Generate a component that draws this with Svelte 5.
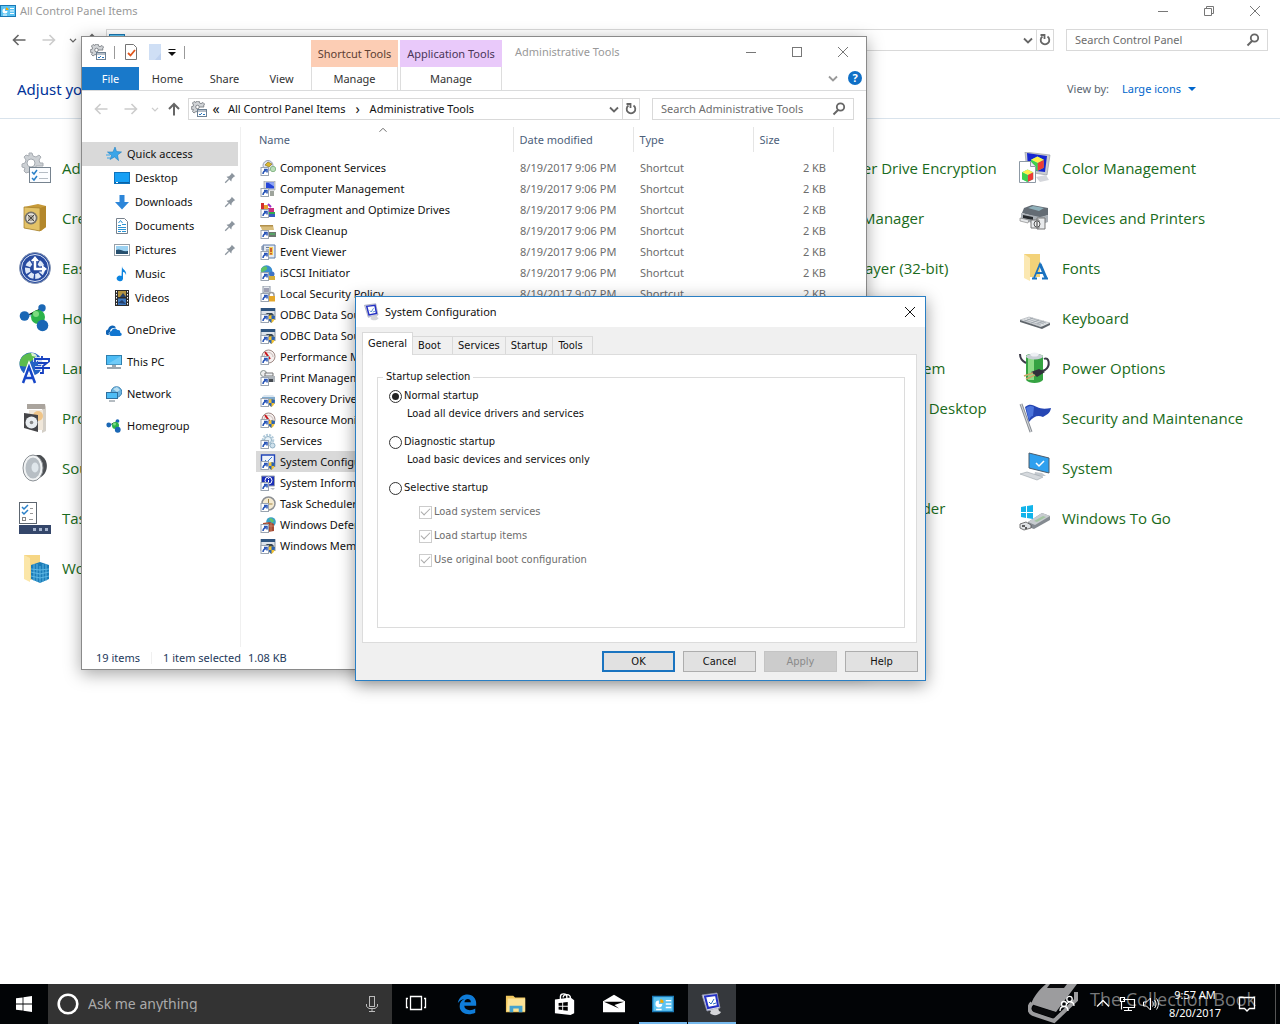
<script>
  let startup = $state('normal');
  let activeTab = $state('General');
  let viewBy = $state('Large icons');

  // small parts that several icons share
  const arrow = `<rect x="1" y="7.500" width="7.500" height="8" fill="#fff" stroke="#9aa4b0"/><path d="M3 14c0-2 1-3 3-3.500M4 9.500h3v3" fill="none" stroke="#2a56b8" stroke-width="1.500"/>`;
  const shield = `<path d="M8 9l3.500-1L15 9c0 3-1 5.500-3.500 7C9 14.500 8 12 8 9z" fill="#f2c230"/><path d="M11.500 8L15 9l-.3 3h-3.200zM8.300 12h3.200v4C9.500 14.700 8.700 13.500 8.300 12z" fill="#2a62b5"/>`;
  const gauge = `<circle cx="8.500" cy="7.500" r="6.500" fill="#f5efee" stroke="#a08c88"/><path d="M4 8a4.500 4.500 0 0 1 9 0" fill="none" stroke="#c9bdb9"/><path d="M5 3l5 7" stroke="#c8171e" stroke-width="2"/>`;
  const appWindow = `<rect x="1" y="1.500" width="14" height="11" fill="#dde3ea" stroke="#8593a3"/><path d="M1 1h14v3H1z" fill="#2f5580"/><path d="M4 8l3-2h5l2 2-2 3H6z" fill="#384858"/>`;
  const printer = `<path d="M5 3h8v3H5z" fill="#eef1f4" stroke="#777"/><path d="M2 6h13v6H2z" fill="#aeb4ba"/><path d="M4 9h9v3H4z" fill="#454b52"/>`;
  const cubes = `<path d="M0 3l4-2 4 2v5L4 10 0 8z" fill="#26d9c5"/><path d="M4 5l4-2v5l-4 2z" fill="#ef3b35"/><path d="M0 3l4-2 4 2-4 2z" fill="#fff04a"/><path d="M0 3l4 2v5L0 8z" fill="#3fd24a"/>`;

  const icons = {
    controlPanel: [16, `<rect x=".5" y="2.500" width="15" height="11" fill="#5cc3f2" stroke="#1b78b4"/><path d="M5 5.500A2.500 2.500 0 1 0 7.500 8H5z" fill="#fff"/><path d="M6 4.500A2.500 2.500 0 0 1 8.500 7H6z" fill="#f5a800"/><path d="M10 5.500h4M10 8h4M10 10.500h4M3 12h4" stroke="#fff"/>`],
    tools: [16, `<path d="M6 0h2l.5 2 1.500.6L12 1.500 13.500 3l-1 2 .5 1H7v5l-2-.5L3 12 1.500 10.500l1-2L0 8V6l2-.5.5-1.500-1-2L3 .5l2 1z" fill="#d0d3d6" stroke="#85898e"/><circle cx="6.500" cy="6" r="1.800" fill="#fff" stroke="#85898e"/><rect x="6.500" y="8.500" width="9" height="7" fill="#fff" stroke="#6c7f92"/><path d="M7 10h8" stroke="#6c7f92"/><path d="M8 13l1 1 2-2M12 13.500h2" fill="none" stroke="#2878c0"/>`],
    check: [16, `<path d="M2.500.5h8l3 3v12h-11z" fill="#fff" stroke="#747474"/><path d="M5 9l2.500 2.500L12 6" fill="none" stroke="#e0561c" stroke-width="1.800"/>`],
    blank: [16, `<path d="M2 0h12v16H2z" fill="#cfdff5"/><path d="M14 9v7H8z" fill="#bfd2ef"/>`],
    customize: [12, `<path d="M2.500 3.500h7" stroke="#111"/><path d="M2 6h8l-4 4z" fill="#111"/>`],
    back: [16, `<path d="M14.500 8H2.500M7.500 3L2.500 8l5 5" fill="none" stroke="currentColor" stroke-width="1.600"/>`],
    forward: [16, `<path d="M1.500 8h12M8.500 3l5 5-5 5" fill="none" stroke="currentColor" stroke-width="1.600"/>`],
    up: [16, `<path d="M8 14.500V3M3 8l5-5 5 5" fill="none" stroke="currentColor" stroke-width="2"/>`],
    chevron: [16, `<path d="M4 6.500l4 4 4-4" fill="none" stroke="currentColor" stroke-width="1.800"/>`],
    sort: [16, `<path d="M4 10l4-4 4 4" fill="none" stroke="#555"/>`],
    refresh: [14, `<path d="M9.500 3.500A4.300 4.300 0 1 1 4.500 3.500" fill="none" stroke="#666" stroke-width="1.800"/><path d="M2.500 2h4v4" fill="none" stroke="#666" stroke-width="1.800"/>`],
    search: [16, `<circle cx="9.500" cy="6" r="3.700" fill="none" stroke="#666" stroke-width="1.800"/><path d="M7 9l-4.500 4.500" stroke="#666" stroke-width="2"/>`],
    minimize: [16, `<path d="M3 8.500h10" stroke="currentColor"/>`],
    maximize: [16, `<rect x="3.500" y="3.500" width="9" height="9" fill="none" stroke="currentColor"/>`],
    restore: [16, `<path d="M3.500 5.500h7v7h-7zM5.500 5.500v-2h7v7h-2" fill="none" stroke="currentColor"/>`],
    close: [16, `<path d="M3 3l10 10M13 3L3 13" stroke="currentColor"/>`],
    pin: [16, `<path d="M10 2l4 4-1.500.5L10 9l-.5 3L4 6.500 7 6l2.500-2.500z" fill="#8c959e"/><path d="M6.500 9.500L2.500 13.500" stroke="#8c959e" stroke-width="1.500"/>`],

    star: [16, `<path d="M9 1l1.500 4.500 5 .5-4 3 1 5.500L8.500 11 4 13.500l1.500-4-4-3.500H7z" fill="#3ba5e8" stroke="#1c7fc4" stroke-width=".6"/><path d="M0 9h4M1 12h3" stroke="#3ba5e8"/>`],
    desktop: [16, `<rect x=".5" y="2.500" width="15" height="11" fill="#17a0f5" stroke="#0d73bd"/><path d="M1 12.500h14" stroke="#0b62a5"/><path d="M2 12.500h2" stroke="#fff"/>`],
    downloads: [16, `<path d="M5.500 1h5v7h4.500L8 15.500 1 8h4.500z" fill="#2d86d9"/>`],
    documents: [16, `<path d="M2.500.5h8l3 3v12h-11z" fill="#fff" stroke="#77818c"/><path d="M4.500 5l2-2.500L8.500 5M4 7.500h3M8 6.500h4M4 9.500h8M4 11.500h8M4 13.500h3M8 13.500h4" fill="none" stroke="#2b93d3"/>`],
    pictures: [16, `<rect x=".5" y="2.500" width="15" height="11" fill="#fff" stroke="#97a0a8"/><path d="M2 4h12v8H2z" fill="#9cd2f2"/><path d="M2 8c4-2 6 2 12 1v3H2z" fill="#264f6d"/>`],
    music: [16, `<path d="M8 0c0 4 5 4 4 9-.5-2-1.500-3-3-3v7a3.200 2.800 0 1 1-1.500-3z" fill="#0c84e0"/>`],
    videos: [16, `<path d="M1 0h14v16H1z" fill="#2b2b2b"/><path d="M4 1h8v6H4z" fill="#b39340"/><path d="M4 8.500h8V15H4z" fill="#3d78c0"/><path d="M6 7l3-4 3 4M4 13l4-3 4 4" fill="#24406b"/><path d="M2.500 1v15M13.500 1v15" stroke="#fff" stroke-dasharray="1.500 1.500"/>`],
    onedrive: [16, `<path d="M1 13a3 3 0 0 1 1-5.500C3 3 8 2 10 5.500L8 6c-3 0-4 2-4 4-1.500.5-1.500 2-1 3z" fill="#0f63b5"/><path d="M6 14a2.500 2.500 0 0 1-.5-5C6 6 10 5.500 11.500 8c2.500-.5 3 1.500 2.500 2.500 2.500.5 2 3.500 0 3.500z" fill="#1176d0"/>`],
    pc: [16, `<rect x=".5" y="1.500" width="15" height="9" fill="#4dbcf5" stroke="#2e7fae"/><path d="M1 10.500L15 2v8.500z" fill="#8bd6fa" opacity=".6"/><path d="M6 12h4M1 14h14" stroke="#7d8a95" stroke-width="1.300"/>`],
    network: [16, `<circle cx="10.500" cy="6" r="5.300" fill="#6cb4e0" stroke="#3e84b5"/><path d="M7 3l4-2 3 3-3 2z" fill="#b9dff2"/><rect x=".5" y="6.500" width="11" height="6" fill="#4dbcf5" stroke="#2e6f9e"/><path d="M3 15h6" stroke="#6d7a85"/>`],
    homegroup: [32, `<path d="M6 14l13-1 5-8M19 14l4 10" stroke="#8fc6e8" stroke-width="2"/><circle cx="5.500" cy="14" r="4.800" fill="#1a67b5"/><circle cx="23" cy="6" r="3.700" fill="#1a67b5"/><circle cx="19" cy="15" r="7" fill="#2bb34a"/><circle cx="23.500" cy="23.500" r="5.800" fill="#1a67b5"/><circle cx="17" cy="12" r="3" fill="#7cdb7f"/>`],

    component: [16, `<circle cx="8" cy="5.500" r="5" fill="#dfe3ee" stroke="#98a2b8"/><path d="M5 5l3-3 4 2-3 3z" fill="#d9b62c" stroke="#7e6a1c" stroke-width=".6"/><circle cx="13" cy="9" r="2.700" fill="#b9deb9" stroke="#8bb98b"/>${arrow}`],
    computer: [16, `<path d="M4 0h11v9H4z" fill="#d4d7dc" stroke="#8b9097" stroke-width=".6"/><path d="M6 1.500h8v6H6z" fill="#2445d8"/><path d="M8 1.500h6v4z" fill="#8ea6f5"/><path d="M10 10h4v5h-4z" fill="#9ea49c"/>${arrow}`],
    defrag: [16, `<path d="M1 1h3v6H1z" fill="#d22f2f"/><path d="M4 3h4v4H4z" fill="#e8a030"/><path d="M8 2l3 3" stroke="#9b2fc6" stroke-width="2"/><path d="M8 6h6v4H8z" fill="#cc2f80"/><path d="M9 10h6v2H9z" fill="#32a850"/><path d="M9 12h6v3H9z" fill="#365ec0"/>${arrow}`],
    cleanup: [16, `<path d="M0 2h13l1 5H2z" fill="#d8bd7c"/><path d="M0 2h13v1.500H0z" fill="#b2904c"/><path d="M8 9h8v5H8z" fill="#6d7770"/><path d="M10 11h5" stroke="#46d060"/>${arrow}`],
    event: [16, `<path d="M3 1h12v13H3z" fill="#e4e9f1" stroke="#5d7aa8"/><path d="M1 3h3M1 5h3M6 3.500h3M6 6h3" stroke="#697d99"/><path d="M9 3h4v8H9z" fill="#f3cf55"/><path d="M11 4v4M11 9v1.500" stroke="#bf3a20" stroke-width="1.500"/>${arrow}`],
    iscsi: [16, `<circle cx="6.500" cy="6" r="5.800" fill="#3b8ed0"/><path d="M3 2c3-2 5 0 4 2S3 6 2 8c-2-3-1-5 1-6z" fill="#5fc266"/><circle cx="12" cy="9" r="2.500" fill="#3f72c4"/><path d="M9 11h6v4H9z" fill="#d5ae3a"/>${arrow}`],
    policy: [16, `<path d="M3 0h7v7H3z" fill="#e8ecf0" stroke="#8d98a5"/><path d="M4 3h5M4 5h5" stroke="#557"/><path d="M9 10.500V9a2.500 2.500 0 0 1 5 0v1.500" fill="none" stroke="#9a9a9a" stroke-width="1.500"/><path d="M8.500 10H15v5.500H8.500z" fill="#e4a72b"/>${arrow}`],
    odbc: [16, `${appWindow}${shield}${arrow}`],
    memory: [16, `${appWindow}${shield}${arrow}`],
    performance: [16, `${gauge}${arrow}`],
    resource: [16, `${gauge}${shield}${arrow}`],
    print: [16, `<circle cx="3.500" cy="3.500" r="3" fill="#eee" stroke="#85908f"/>${printer}${arrow}`],
    recovery: [16, `<path d="M2 6l2-2h9l2 2z" fill="#dbe6ef"/><path d="M2 6h13v7H2z" fill="#7fa9cc"/>${shield}${arrow}`],
    services: [16, `<circle cx="8" cy="7" r="5" fill="none" stroke="#b4ccdb" stroke-width="2.500" stroke-dasharray="2 1"/><circle cx="8" cy="7" r="3.500" fill="#e8f2f8" stroke="#8fb0c4"/><circle cx="12.500" cy="12.500" r="2.500" fill="#cfe1ec" stroke="#8fb0c4"/>${arrow}`],
    sysconfig: [16, `<path d="M1.500 1h13v11h-13z" fill="#eef3fb" stroke="#2346b8" stroke-width="1.400"/><path d="M5 6l2 2 5-5" fill="none" stroke="#3a76d2"/>${shield}${arrow}`],
    sysinfo: [16, `<path d="M1.500 1h13v10h-13z" fill="#1b2fb8" stroke="#9ca3ad"/><circle cx="8.500" cy="5.500" r="3.500" fill="none" stroke="#fff"/><path d="M8.500 3v1M8.500 5v3" stroke="#fff"/><path d="M10 13h5l-2 2z" fill="#b7bcc2"/>${arrow}`],
    scheduler: [16, `<circle cx="8.500" cy="7.500" r="6.500" fill="#f4ead0" stroke="#8d9094" stroke-width="1.500"/><path d="M8.500 3v5h4" fill="none" stroke="#a28747"/>${arrow}`],
    firewall: [16, `<circle cx="11" cy="5" r="4.800" fill="#3aa0c8"/><path d="M9 2c2-2 4 0 5 2l-2 2z" fill="#65c46a"/><path d="M3 6l7-1 4 2v7l-6 1-5-2z" fill="#a44a32"/><path d="M3 9h11M7 5v10M11 6v8" stroke="#d79275" stroke-width=".7"/>${arrow}`],

    admin: [32, `<path d="M10 1h3l1 3 3 1 3-2 2 2-2 3 1 3h3v3h-7v9h-6l-1-3-3 1-2-2 1-3-3-1v-3l3-1 1-3-2-3 2-2 3 1z" fill="#ccd0d4" stroke="#a8adb3"/><circle cx="12" cy="11" r="4" fill="#fff" stroke="#a5abb1"/><rect x="10.500" y="15.500" width="21" height="15" fill="#fcfdff" stroke="#76838f"/><path d="M13 20l2 2 3-4M13 26l2 2 3-4" fill="none" stroke="#2a80c8" stroke-width="1.500"/><path d="M20 20.500h9M20 26.500h9" stroke="#b5bcc4"/>`],
    credential: [32, `<path d="M5 5l14-3 8 2v21l-5 4-17-3z" fill="#c79a38"/><path d="M5 5l16 1v23L5 26z" fill="#e3c267" stroke="#a17a27" stroke-width=".7"/><path d="M21 6l6-2v21l-6 4z" fill="#b3872b"/><circle cx="12" cy="16" r="6.500" fill="#77736a"/><circle cx="12" cy="16" r="4" fill="#aaa69c" stroke="#ece9e2" stroke-width="1.500"/><path d="M9 13l6 6M15 13l-6 6" stroke="#4c4943"/>`],
    ease: [32, `<circle cx="16" cy="16" r="15.500" fill="#274a9f" stroke="#8b9ab5"/><circle cx="16" cy="16" r="13.500" fill="none" stroke="#dbe5f5"/><circle cx="16" cy="17" r="7.500" fill="none" stroke="#dfe9f8" stroke-width="5" stroke-dasharray="5 1.500"/><path d="M16 8v9h8" fill="none" stroke="#274a9f" stroke-width="5"/><path d="M16 8v9h8" fill="none" stroke="#fff" stroke-width="2.500"/><path d="M12 9l4-5 4 5zM23 13l5 4-5 4z" fill="#fff"/>`],
    language: [32, `<circle cx="12" cy="12" r="11.500" fill="#2362c4"/><path d="M4 4c5-4 11-4 12 0s-5 4-6 8-6 2-9 2c-1-4 0-7 3-10z" fill="#5cbc4d"/><path d="M12 1c4 0 6 2 6 4l-5-1z" fill="#d9f0d0"/><path d="M16 7h15M16 6v4M30 6v4M23 4v3M19 11h9l-4 3v7h-3M16 16h15" fill="none" stroke="#fff" stroke-width="3.500"/><path d="M16 7h15M16 6v4M30 6v4M23 4v3M19 11h9l-4 3v7h-3M16 16h15" fill="none" stroke="#1640c0" stroke-width="1.800"/><path d="M4 31L10 15l6 16M6 26h8" fill="none" stroke="#fff" stroke-width="5"/><path d="M4 31L10 15l6 16M6 26h8" fill="none" stroke="#1646c8" stroke-width="2.500"/>`],
    programs: [32, `<path d="M8 2h18l1 3v24l-4 2V7H8z" fill="#d5d0c8"/><path d="M8 2h18v5H8z" fill="#aaa49d"/><path d="M10 8h14v20H10z" fill="#f0e7da"/><circle cx="19" cy="14" r="5" fill="#f0c588"/><path d="M5 11l14 2v17L5 26z" fill="#454548"/><circle cx="12.500" cy="20.500" r="6" fill="#e9edf0"/><circle cx="12.500" cy="20.500" r="1.800" fill="#888"/>`],
    sound: [32, `<path d="M12 3h9c9 4 9 17 1 22l-7 4z" fill="#4b4e52"/><ellipse cx="14" cy="16" rx="10" ry="13" fill="#f1f3f4" stroke="#8c9196"/><ellipse cx="14" cy="16" rx="7.500" ry="10.500" fill="#b7bec4"/><ellipse cx="16" cy="15.500" rx="3.500" ry="5" fill="#dfe6eb"/>`],
    taskbar: [32, `<rect x=".5" y=".5" width="17" height="21" fill="#fff" stroke="#5d6670"/><path d="M3 5l2 2 4-4M3 10l2 2 4-4" fill="none" stroke="#2a80c8" stroke-width="1.500"/><rect x="3.500" y="15.500" width="3" height="3" fill="none" stroke="#888"/><path d="M11 6.500h3M11 11.500h3M10 17.500h4" stroke="#999"/><path d="M0 23h32v9H0z" fill="#34466a"/><path d="M14 26h3v3h-3zM20 26h3v3h-3zM26 26h3v3h-3z" fill="#a6b4ce"/>`],
    work: [32, `<path d="M5 3h16v22l-10 3-6-3z" fill="#f6d684"/><path d="M5 3l6 3v24l-6-3z" fill="#fbe6a8"/><path d="M12 13l9-3 9 3v14l-9 4-9-4z" fill="#1c7cb8"/><path d="M12 17l9 1 9-1M12 20l9 2 9-2M12 24l9 2 9-2M15 12v17M18 12v18M21 14v17M24 12v18M27 12v17" fill="none" stroke="#63bbe6" stroke-width=".9"/>`],
    color: [32, `<path d="M6 0l25 3-3 20-20-3z" fill="#c9ccd2" stroke="#8d929b" stroke-width=".6"/><path d="M8 1l20 3-2 16-17-2z" fill="#1726cf"/><g transform="translate(12 3) scale(1.600)">${cubes}</g><path d="M17 25l10-2 3 5-9 2z" fill="#d5d7dc"/><path d="M.5 9.500h11l5 5v16H.5z" fill="#fff" stroke="#8d99a5"/><path d="M11.500 9.500v5h5" fill="#e8ecf0" stroke="#8d99a5"/><g transform="translate(3 16) scale(1.400)">${cubes}</g>`],
    printers: [32, `<path d="M5 6l8-3 16 3v7l-8 3L3 11z" fill="#646c74"/><path d="M9 6l5-2 11 2-5 3z" fill="#8fb0ba"/><path d="M2 11l19 4 8-2v7l-8 3-19-5z" fill="#a9afb5"/><path d="M4 13l10 2v3L4 16z" fill="#25292d"/><path d="M1 16l9 2-1 3-8-2z" fill="#e6e8ea" stroke="#777" stroke-width=".6"/><path d="M12 18h8v8h-8zM18 16h8v11h-8z" fill="#e8eaec" stroke="#777"/><circle cx="18" cy="22" r="3" fill="#eee" stroke="#555"/><path d="M18 20v4" stroke="#333"/>`],
    fonts: [32, `<path d="M5 2h16v23H11l-6-2z" fill="#f3d279"/><path d="M5 2l6 4v23l-6-3z" fill="#fbe8b2"/><path d="M15 26l6-14 6 14M17 21h8M13 26.500h5M23 26.500h6" fill="none" stroke="#1a72c0" stroke-width="1.800"/><path d="M21 12l6 14" stroke="#1a72c0" stroke-width="3"/>`],
    keyboard: [32, `<path d="M1 18l9-3 21 6-7 4z" fill="#dfe2e4" stroke="#a4aab0" stroke-width=".6"/><path d="M1 18l21 7 9-4v2l-8 4L1 20z" fill="#60666c"/><path d="M5 18l17 5M8 17l17 5M11 16l16 5M6 19l8-3M12 21l8-3M18 22l7-3" stroke="#9aa1a8" stroke-width=".7"/>`],
    power: [32, `<path d="M7 4c0-3 15-3 17 0v24c-3 4-14 4-17 0z" fill="#35a342"/><path d="M9 6h6v22H9z" fill="#8ddc86"/><ellipse cx="15.500" cy="4.500" rx="8.500" ry="3" fill="#c9cfd6"/><ellipse cx="15.500" cy="2.500" rx="4" ry="2" fill="#eef0f4"/><path d="M1 2c0 4 2 7 6 9M25 7c5-3 7 7 1 11l-5 2" fill="none" stroke="#3b3a48" stroke-width="2"/><path d="M12 20l8-3 6 3-8 5z" fill="#30303a"/><path d="M5 24l9-3M7 27l9-4" stroke="#c9a569" stroke-width="1.800"/>`],
    security: [32, `<path d="M2 2l10 28" stroke="#8b9096" stroke-width="3"/><path d="M2 2l10 28" stroke="#d8dadd"/><path d="M6 5c5-4 8-2 12 0s8 2 14 1c-1 6-5 7-8 9-5-2-9-1-14 5z" fill="#2646b4"/><path d="M7 6c4-3 6-2 8-1l-1 9c-2 0-3 2-4 4z" fill="#4c74dc"/>`],
    system: [32, `<path d="M10 1l20 5v15l-20-5z" fill="#2fa0ef" stroke="#4b5c6c"/><path d="M17 11l3 3 5-5" fill="none" stroke="#fff" stroke-width="1.500"/><path d="M16 20l7 1 4 3H15z" fill="#c2c8ce"/><path d="M1 22l7-2 16 5-6 3z" fill="#d5d9dd" stroke="#9ba2a9" stroke-width=".6"/>`],
    togo: [32, `<path d="M2 5l5-1v6H2zM8 4l6-1v7H8zM2 11h5v5l-5-1zM8 11h6v6l-6-1z" fill="#12b4ea"/><path d="M9 20l14-9 8 3v4L15 27l-6-2z" fill="#858b91"/><path d="M9 20l14-9 8 3-15 9z" fill="#c8ccd0"/><path d="M15 19l9-5 3 1-9 5z" fill="#a5c6a3"/><path d="M1 22l6-2 5 3v3l-7 2-4-2z" fill="#dfe2e5" stroke="#555" stroke-width=".8"/><path d="M3 24h3M6 26h2" stroke="#333" stroke-width="1.500"/>`],

    monitor: [24, `<path d="M2 3l15-2 3 15-13 3z" fill="#d4d7e6" stroke="#8d90a8" stroke-width=".8"/><path d="M5 4.500l11-1.500 2 11-10 2z" fill="#fff" stroke="#2431c4" stroke-width="2"/><path d="M9 10l2 2 3-5M13 12l3-1" fill="none" stroke="#2a6fc0"/><path d="M10 18l8-2 1 3 2 1c-2 4-9 4-11 1l1-2z" fill="#d4d5d9"/>`],
    start: [16, `<path d="M0 2.300L6.600 1.400v6.200H0zM7.400 1.300L16 0v7.600H7.400zM0 8.400h6.600v6.200L0 13.700zM7.400 8.400H16V16l-8.600-1.300z" fill="#fff"/>`],
    cortana: [24, `<circle cx="12" cy="12" r="9.300" fill="none" stroke="#fff" stroke-width="2.600"/>`],
    mic: [16, `<rect x="5.500" y=".5" width="5" height="10" fill="none" stroke="#bbb"/><path d="M2.500 8v2.500l2.500 2h6l2.500-2V8M8 12.500v3M5 15.500h6" fill="none" stroke="#bbb"/>`],
    taskview: [24, `<path d="M6.500 4.500h11v13h-11zM4 6.500H2.500v9H4M20 6.500h1.500v9H20" fill="none" stroke="#fff" stroke-width="1.300"/>`],
    edge: [24, `<path d="M2 11C3 4 8 1.500 12.500 1.500 18.500 1.500 22 6 22 11v3H9c.3 5 7 6 12 3v4.500C14 25 4 23 4 14.500c0-4 2-6.500 5-8C6 7 4 8.500 2 11zM9.200 10h7c0-4.500-6.500-4.500-7 0z" fill="#0f7cd8"/>`],
    folder: [24, `<path d="M1 3h8l2 2h11v16H1z" fill="#f0c75e"/><path d="M3 6h19v14H2z" fill="#fce397"/><path d="M5 21v-7h14v7h-4v-4H9v4z" fill="#45a3cf"/>`],
    store: [24, `<path d="M1 7l17-2 4 3v14l-4 2-17-2z" fill="#fff"/><path d="M7 7V4c0-4 7-4 7 0v3M10 5c0-4 8-5 8 1" fill="none" stroke="#fff" stroke-width="1.500"/><path d="M5 11l4-.5V14H5zM10 10.300l5-.6V14h-5zM5 15h4v3.500L5 18zM10 15h5v4.300l-5-.6z" fill="#000"/>`],
    mail: [24, `<path d="M0 9L12 2l12 7v12H0z" fill="#fff"/><path d="M1 9.500h22L12.500 13l5 4z" fill="#000"/>`],
    people: [20, `<circle cx="12.500" cy="5" r="2.700" fill="none" stroke="#fff" stroke-width="1.300"/><path d="M10 10c1-3 7-3 7 2" fill="none" stroke="#fff" stroke-width="1.300"/><circle cx="7" cy="10" r="2.500" fill="none" stroke="#fff" stroke-width="1.300"/><path d="M3 17c0-6 8-6 8 0" fill="none" stroke="#fff" stroke-width="1.300"/>`],
    trayUp: [20, `<path d="M4 12.500l6-6 6 6" fill="none" stroke="#fff" stroke-width="1.300"/>`],
    wired: [20, `<path d="M6 5.500h11.500v8H6M11.500 13.500v3M7 16.500h8M3.500 3.500h4v4h-4zM4.500 7.500v8" fill="none" stroke="#fff" stroke-width="1.200"/>`],
    volume: [20, `<path d="M2.500 8h3l4-4v12l-4-4h-3z" fill="none" stroke="#fff"/><path d="M11.500 7.500c1 1.500 1 3.500 0 5M13.500 6c2 2.500 2 5.500 0 8M15.500 4.500c2.500 3.500 2.500 7.500 0 11" fill="none" stroke="#fff"/>`],
    notice: [20, `<path d="M2.500 3.500h15v11h-5L10 17l-2.500-2.500h-5z" fill="none" stroke="#fff" stroke-width="1.300"/>`],
    book: [52, `<path d="M18 0h31L28 28 3 20c3-8 8-14 15-20z" fill="#9c9c9e"/><path d="M22 0h17l-3 4H19z" fill="#0a0b0d"/><path d="M4 19c-4 4-3 9 1 11l21 7L48 16V8" fill="none" stroke="#9c9c9e" stroke-width="4"/><path d="M6 22l21 6-1 6-19-6c-3-1-3-4-1-6z" fill="#0a0b0d"/>`],
  };

  // row by row; the columns in between lie under the open windows
  const panelItems = [
    { label: 'Administrative Tools', icon: 'admin', col: 1 },
    { label: 'BitLocker Drive Encryption', col: 4 },
    { label: 'Color Management', icon: 'color', col: 5 },
    { label: 'Credential Manager', icon: 'credential', col: 1 },
    { label: 'Device Manager', col: 4 },
    { label: 'Devices and Printers', icon: 'printers', col: 5 },
    { label: 'Ease of Access Center', icon: 'ease', col: 1 },
    { label: 'Flash Player (32-bit)', col: 4 },
    { label: 'Fonts', icon: 'fonts', col: 5 },
    { label: 'HomeGroup', icon: 'homegroup', col: 1 },
    { label: 'Keyboard', icon: 'keyboard', col: 5 },
    { label: 'Language', icon: 'language', col: 1 },
    { label: 'Phone and Modem', col: 4 },
    { label: 'Power Options', icon: 'power', col: 5 },
    { label: 'Programs and Features', icon: 'programs', col: 1 },
    { label: 'RemoteApp and Desktop Connections', col: 4 },
    { label: 'Security and Maintenance', icon: 'security', col: 5 },
    { label: 'Sound', icon: 'sound', col: 1 },
    { label: 'System', icon: 'system', col: 5 },
    { label: 'Taskbar and Navigation', icon: 'taskbar', col: 1 },
    { label: 'Windows Defender Security Center', col: 4 },
    { label: 'Windows To Go', icon: 'togo', col: 5 },
    { label: 'Work Folders', icon: 'work', col: 1 },
  ];

  const places = [
    { label: 'Quick access', icon: 'star', active: true },
    { label: 'Desktop', icon: 'desktop', child: true, pinned: true },
    { label: 'Downloads', icon: 'downloads', child: true, pinned: true },
    { label: 'Documents', icon: 'documents', child: true, pinned: true },
    { label: 'Pictures', icon: 'pictures', child: true, pinned: true },
    { label: 'Music', icon: 'music', child: true },
    { label: 'Videos', icon: 'videos', child: true },
    { label: 'OneDrive', icon: 'onedrive', group: true },
    { label: 'This PC', icon: 'pc', group: true },
    { label: 'Network', icon: 'network', group: true },
    { label: 'Homegroup', icon: 'homegroup', group: true },
  ];

  const files = [
    { name: 'Component Services', icon: 'component' },
    { name: 'Computer Management', icon: 'computer' },
    { name: 'Defragment and Optimize Drives', icon: 'defrag' },
    { name: 'Disk Cleanup', icon: 'cleanup' },
    { name: 'Event Viewer', icon: 'event' },
    { name: 'iSCSI Initiator', icon: 'iscsi' },
    { name: 'Local Security Policy', icon: 'policy', date: '8/19/2017 9:07 PM' },
    { name: 'ODBC Data Sources (32-bit)', icon: 'odbc' },
    { name: 'ODBC Data Sources (64-bit)', icon: 'odbc' },
    { name: 'Performance Monitor', icon: 'performance' },
    { name: 'Print Management', icon: 'print' },
    { name: 'Recovery Drive', icon: 'recovery' },
    { name: 'Resource Monitor', icon: 'resource' },
    { name: 'Services', icon: 'services' },
    { name: 'System Configuration', icon: 'sysconfig', selected: true },
    { name: 'System Information', icon: 'sysinfo' },
    { name: 'Task Scheduler', icon: 'scheduler' },
    { name: 'Windows Defender Firewall', icon: 'firewall' },
    { name: 'Windows Memory Diagnostic', icon: 'memory' },
  ];

  const tabs = ['General', 'Boot', 'Services', 'Startup', 'Tools'];
  const startupModes = [
    { id: 'normal', label: 'Normal startup', note: 'Load all device drivers and services' },
    { id: 'diagnostic', label: 'Diagnostic startup', note: 'Load basic devices and services only' },
    { id: 'selective', label: 'Selective startup' },
  ];
  const selective = ['Load system services', 'Load startup items', 'Use original boot configuration'];

  const apps = [
    { label: 'Edge', icon: 'edge' },
    { label: 'File Explorer', icon: 'folder' },
    { label: 'Store', icon: 'store' },
    { label: 'Mail', icon: 'mail' },
    { label: 'Control Panel', icon: 'controlPanel', open: true },
    { label: 'System Configuration', icon: 'monitor', open: true, active: true },
  ];
</script>

{#snippet icon(name, size = 16)}
  <svg class="icon" width={size} height={size} viewBox="0 0 {icons[name][0]} {icons[name][0]}" aria-hidden="true">
    {@html icons[name][1]}
  </svg>
{/snippet}

{#snippet windowButtons(middle)}
  <div class="window-buttons">
    <button aria-label="Minimize">{@render icon('minimize')}</button>
    <button aria-label={middle}>{@render icon(middle)}</button>
    <button aria-label="Close">{@render icon('close')}</button>
  </div>
{/snippet}

{#snippet navBar(iconName, crumbs, placeholder, canGoBack)}
  <div class="navbar">
    <button class="nav-arrow" class:dim={!canGoBack} aria-label="Back">{@render icon('back')}</button>
    <button class="nav-arrow dim" aria-label="Forward">{@render icon('forward')}</button>
    <button class="nav-recent" class:dim={!canGoBack} aria-label="Recent locations">{@render icon('chevron', 12)}</button>
    <button class="nav-up" aria-label="Up">{@render icon('up')}</button>
    <div class="address">
      {@render icon(iconName)}
      <span class="crumb-sep">{canGoBack ? '›' : '«'}</span>
      {#each crumbs as crumb, i}
        {#if i > 0}<span class="crumb-sep">›</span>{/if}
        <button class="crumb">{crumb}</button>
      {/each}
      <button class="address-drop" aria-label="Previous locations">{@render icon('chevron')}</button>
      <button class="address-refresh" aria-label="Refresh">{@render icon('refresh', 14)}</button>
    </div>
    <label class="search">
      <input type="text" {placeholder} aria-label={placeholder} />
      {@render icon('search')}
    </label>
  </div>
{/snippet}

<div class="screen">
  <main class="desktop">
    <section class="control-panel">
      <header class="titlebar">
        {@render icon('controlPanel')}
        <span class="title">All Control Panel Items</span>
        {@render windowButtons('restore')}
      </header>
      {@render navBar('controlPanel', ['Control Panel', 'All Control Panel Items'], 'Search Control Panel', true)}
      <div class="panel-head">
        <h1>Adjust your computer's settings</h1>
        <label for="view-by">View by:</label>
        <div class="view-select">
          <select id="view-by" bind:value={viewBy}>
            <option>Large icons</option>
            <option>Small icons</option>
          </select>
        </div>
      </div>
      <div class="panel-grid">
        {#each panelItems as item}
          <a class="panel-item" href="#panel" style:grid-column={item.col}>
            <span class="panel-icon">
              {#if item.icon}{@render icon(item.icon, 32)}{/if}
            </span>
            <span>{item.label}</span>
          </a>
        {/each}
      </div>
    </section>

    <section class="explorer">
      <header class="ribbon">
        <div class="ribbon-left">
          <div class="quick-bar">
            {@render icon('tools')}
            <i></i>
            <button aria-label="Properties">{@render icon('check')}</button>
            <button aria-label="New folder">{@render icon('blank')}</button>
            <button class="narrow" aria-label="Customize">{@render icon('customize', 12)}</button>
            <i></i>
          </div>
          <div class="ribbon-tabs">
            <button class="file">File</button>
            <button>Home</button>
            <button>Share</button>
            <button>View</button>
          </div>
        </div>
        <div class="context shortcut">
          <span>Shortcut Tools</span>
          <button>Manage</button>
        </div>
        <div class="context application">
          <span>Application Tools</span>
          <button>Manage</button>
        </div>
        <div class="ribbon-right">
          <div class="ribbon-title">
            <span class="title">Administrative Tools</span>
            {@render windowButtons('maximize')}
          </div>
          <div class="ribbon-help">
            <button class="expand" aria-label="Expand the ribbon">{@render icon('chevron')}</button>
            <button class="help" aria-label="Help">?</button>
          </div>
        </div>
      </header>
      {@render navBar('tools', ['All Control Panel Items', 'Administrative Tools'], 'Search Administrative Tools', false)}
      <div class="explorer-body">
        <nav class="places">
          {#each places as place}
            <a href="#place" class:active={place.active} class:child={place.child} class:group={place.group}>
              {@render icon(place.icon)}
              <span>{place.label}</span>
              {#if place.pinned}<b>{@render icon('pin', 14)}</b>{/if}
            </a>
          {/each}
        </nav>
        <div class="files">
          <table>
            <thead>
              <tr>
                <th class="name">Name<span class="sort">{@render icon('sort', 14)}</span></th>
                <th class="date">Date modified</th>
                <th class="type">Type</th>
                <th class="size">Size</th>
              </tr>
            </thead>
            <tbody>
              {#each files as file}
                <tr class:selected={file.selected}>
                  <td><div class="file-name">{@render icon(file.icon)}{file.name}</div></td>
                  <td>{file.date ?? '8/19/2017 9:06 PM'}</td>
                  <td>Shortcut</td>
                  <td class="kb">2 KB</td>
                </tr>
              {/each}
            </tbody>
          </table>
        </div>
      </div>
      <footer class="status">
        <span>19 items</span>
        <i></i>
        <span>1 item selected</span>
        <span class="bytes">1.08 KB</span>
      </footer>
    </section>

    <section class="dialog" role="dialog" aria-label="System Configuration">
      <header>
        {@render icon('monitor', 18)}
        <span>System Configuration</span>
        <button aria-label="Close">{@render icon('close')}</button>
      </header>
      <div class="tabs" role="tablist">
        {#each tabs as tab}
          <button role="tab" aria-selected={activeTab === tab} class:current={activeTab === tab} onclick={() => (activeTab = tab)}>{tab}</button>
        {/each}
      </div>
      <div class="tab-page">
        <fieldset>
          <legend>Startup selection</legend>
          {#each startupModes as mode}
            <div class="mode">
              <label><input type="radio" name="startup" value={mode.id} bind:group={startup} />{mode.label}</label>
              {#if mode.note}<p>{mode.note}</p>{/if}
            </div>
          {/each}
          <div class="selective">
            {#each selective as option}
              <label><input type="checkbox" checked disabled={startup !== 'selective'} />{option}</label>
            {/each}
          </div>
        </fieldset>
      </div>
      <footer>
        <button class="default">OK</button>
        <button>Cancel</button>
        <button disabled>Apply</button>
        <button>Help</button>
      </footer>
    </section>
  </main>

  <footer class="taskbar">
    <button class="task" aria-label="Start">{@render icon('start')}</button>
    <label class="ask">
      {@render icon('cortana', 24)}
      <input type="text" placeholder="Ask me anything" aria-label="Ask me anything" />
      {@render icon('mic')}
    </label>
    <button class="task" aria-label="Task view">{@render icon('taskview', 24)}</button>
    <div class="apps">
      {#each apps as app}
        <button class="task" class:open={app.open} class:active={app.active} aria-label={app.label}>{@render icon(app.icon, app.icon === 'monitor' ? 24 : 22)}</button>
      {/each}
    </div>
    <div class="watermark">
      {@render icon('book', 52)}
      <span>The Collection Book</span>
    </div>
    <div class="tray">
      {@render icon('people', 20)}
      <div class="tray-icons">
        {@render icon('trayUp', 20)}
        {@render icon('wired', 20)}
        {@render icon('volume', 20)}
      </div>
      <div class="clock">
        <span>9:57 AM</span>
        <span>8/20/2017</span>
      </div>
      {@render icon('notice', 20)}
    </div>
  </footer>
</div>

<style>
  :global(body) {
    margin: 0;
  }
  .screen {
    display: flex;
    flex-direction: column;
    height: 100vh;
    overflow: hidden;
    background: #fff;
    color: #111;
    font-family: 'Noto Sans', 'Open Sans', sans-serif;
    font-size: 11px;
    line-height: 16px;
  }
  .screen * {
    box-sizing: border-box;
  }
  button,
  input,
  select {
    margin: 0;
    padding: 0;
    border: 0;
    background: none;
    color: inherit;
    font: inherit;
  }
  button {
    display: flex;
    align-items: center;
    justify-content: center;
  }
  a {
    color: inherit;
    text-decoration: none;
  }
  .icon {
    display: block;
    flex: none;
  }
  .desktop {
    position: relative;
    flex: 1;
    min-height: 0;
  }

  /* shared window parts */
  .title {
    flex: 1;
    color: #999;
  }
  .window-buttons {
    display: flex;
    color: #777;
  }
  .window-buttons button {
    width: 46px;
    height: 22px;
  }
  .navbar {
    display: flex;
    align-items: center;
    padding: 7px 12px 7px 4px;
    color: #666;
  }
  .nav-arrow {
    width: 30px;
  }
  .nav-recent {
    width: 18px;
  }
  .nav-up {
    width: 20px;
    margin-right: 4px;
  }
  .navbar .dim {
    color: #ccc;
  }
  .address {
    flex: 1;
    display: flex;
    align-items: center;
    height: 22px;
    padding-left: 2px;
    border: 1px solid #d9d9d9;
    color: #111;
  }
  .crumb-sep {
    width: 18px;
    font-size: 14px;
    text-align: center;
  }
  .crumb {
    padding: 0 3px;
    white-space: nowrap;
  }
  .address-drop {
    margin-left: auto;
    color: #666;
  }
  .address-refresh {
    width: 17px;
    height: 20px;
    border-left: 1px solid #d9d9d9;
  }
  .search {
    display: flex;
    align-items: center;
    width: 202px;
    height: 22px;
    margin-left: 12px;
    padding: 0 6px 0 8px;
    border: 1px solid #d9d9d9;
  }
  .search input {
    flex: 1;
    min-width: 0;
    outline: 0;
  }
  .search input::placeholder {
    color: #6d6d6d;
    opacity: 1;
  }

  /* control panel */
  .titlebar {
    display: flex;
    align-items: center;
    gap: 4px;
    height: 22px;
    padding-right: 2px;
  }
  .panel-head {
    display: flex;
    align-items: center;
    height: 61px;
    padding: 2px 84px 0 17px;
    border-bottom: 1px solid #d9e3ec;
    color: #5a6570;
  }
  h1 {
    flex: 1;
    margin: 0;
    color: #039;
    font-size: 15px;
    font-weight: 400;
    line-height: 20px;
  }
  .view-select {
    display: flex;
    align-items: center;
    margin-left: 13px;
    color: #06c;
  }
  .view-select select {
    appearance: none;
    outline: 0;
  }
  .view-select::after {
    content: '';
    margin-left: 6px;
    border: 4px solid transparent;
    border-top-color: #06c;
    border-bottom: 0;
  }
  .panel-grid {
    display: grid;
    grid-template-columns: repeat(5, 250px);
    grid-auto-rows: 50px;
    padding: 24px 0 0 19px;
    color: #1a6b20;
    font-family: 'Open Sans', 'Noto Sans', sans-serif;
    font-size: 15px;
    line-height: 20px;
  }
  .panel-item {
    display: flex;
    align-items: center;
    gap: 11px;
    padding-right: 20px;
  }
  .panel-icon {
    flex: none;
    width: 32px;
  }

  /* administrative tools */
  .explorer {
    position: absolute;
    left: 81px;
    top: 36px;
    display: flex;
    flex-direction: column;
    width: 786px;
    height: 634px;
    border: 1px solid #8a8a8a;
    background: #fff;
    box-shadow: 0 4px 16px rgba(0, 0, 0, 0.35);
  }
  .ribbon {
    display: flex;
    height: 54px;
    border-bottom: 1px solid #dadbdc;
    color: #333;
  }
  .ribbon-left {
    width: 229px;
  }
  .quick-bar {
    display: flex;
    align-items: center;
    gap: 8px;
    height: 30px;
    padding-left: 8px;
  }
  .quick-bar i {
    width: 1px;
    height: 13px;
    background: #999;
  }
  .quick-bar .narrow {
    margin: 0 -2px 0 -5px;
  }
  .ribbon-tabs {
    display: flex;
    height: 23px;
  }
  .ribbon-tabs button {
    width: 57px;
  }
  .ribbon-tabs .file {
    background: #1979ca;
    color: #fff;
  }
  .context {
    display: flex;
    flex-direction: column;
    margin: 3px 2px 0 0;
    white-space: nowrap;
    text-align: center;
  }
  .context span {
    height: 27px;
    line-height: 28px;
  }
  .context button {
    height: 23px;
    border: solid #ddd;
    border-width: 0 1px;
  }
  .shortcut {
    width: 87px;
  }
  .shortcut span {
    background: #fccdb4;
    color: #5c4033;
  }
  .application {
    width: 102px;
  }
  .application span {
    background: #e9c9fa;
    color: #4a3558;
  }
  .ribbon-right {
    flex: 1;
  }
  .ribbon-title {
    display: flex;
    align-items: center;
    height: 30px;
    padding-left: 11px;
  }
  .ribbon-help {
    display: flex;
    align-items: center;
    justify-content: flex-end;
    gap: 7px;
    height: 22px;
    padding-right: 4px;
    color: #999;
  }
  .help {
    width: 14px;
    height: 14px;
    border-radius: 50%;
    background: #0f6fc6;
    color: #fff;
    font-weight: 700;
  }
  .explorer-body {
    flex: 1;
    display: flex;
    min-height: 0;
  }
  .places {
    width: 159px;
    padding: 15px 2px 0 0;
    border-right: 1px solid #f0f0f0;
  }
  .places a {
    display: flex;
    align-items: center;
    gap: 5px;
    height: 24px;
    padding-left: 24px;
  }
  .places a.child {
    padding-left: 32px;
  }
  .places a.group {
    margin-top: 8px;
  }
  .places a.active {
    background: #d9d9d9;
  }
  .places b {
    margin: 0 1px 0 auto;
  }
  .files {
    flex: 1;
    padding-left: 15px;
  }
  table {
    width: 577px;
    border-collapse: collapse;
    table-layout: fixed;
  }
  th {
    position: relative;
    height: 25px;
    padding: 0 6px;
    border-right: 1px solid #e5e5e5;
    color: #4c607a;
    font-weight: 400;
    text-align: left;
  }
  th.name {
    width: 257px;
    padding-left: 3px;
  }
  th.date,
  th.type {
    width: 120px;
  }
  th.size {
    width: 80px;
  }
  .sort {
    position: absolute;
    top: -4px;
    left: 120px;
  }
  tbody::before {
    content: '';
    display: block;
    height: 5px;
  }
  td {
    height: 21px;
    padding: 0 7px;
    color: #6d6d6d;
    white-space: nowrap;
  }
  td:first-child {
    padding: 0 4px;
    color: #111;
  }
  .file-name {
    display: flex;
    align-items: center;
    gap: 4px;
  }
  .kb {
    text-align: right;
  }
  tr.selected {
    background: #d9d9d9;
  }
  .status {
    display: flex;
    align-items: center;
    height: 22px;
    padding-left: 14px;
    color: #1e395b;
  }
  .status i {
    width: 1px;
    height: 12px;
    margin: 0 11px;
    background: #f0f0f0;
  }
  .bytes {
    margin-left: 7px;
  }

  /* system configuration */
  .dialog {
    position: absolute;
    left: 355px;
    top: 296px;
    display: flex;
    flex-direction: column;
    width: 571px;
    height: 385px;
    border: 1px solid #2a7fc4;
    background: #f0f0f0;
    box-shadow: 0 4px 16px rgba(0, 0, 0, 0.4);
    font-family: 'DejaVu Sans Condensed', 'Open Sans', sans-serif;
  }
  .dialog header {
    display: flex;
    align-items: center;
    gap: 4px;
    height: 30px;
    padding: 0 7px;
    background: #fff;
    font-family: 'Noto Sans', 'Open Sans', sans-serif;
  }
  .dialog header button {
    margin-left: auto;
  }
  .tabs {
    display: flex;
    align-items: flex-end;
    height: 27px;
    padding: 0 6px;
  }
  .tabs button {
    justify-content: flex-start;
    min-width: 40px;
    height: 18px;
    padding: 0 5px;
    border: 1px solid #d9d9d9;
    border-width: 1px 1px 0 0;
  }
  .tabs .current {
    position: relative;
    top: 1px;
    height: 23px;
    border-left-width: 1px;
    background: #fff;
  }
  .tab-page {
    flex: 1;
    display: flex;
    margin: 0 8px 0 6px;
    padding: 14px 11px 14px 14px;
    border: 1px solid #dcdcdc;
    background: #fff;
  }
  fieldset {
    flex: 1;
    min-width: 0;
    margin: 0;
    padding: 3px 11px;
    border: 1px solid #dcdcdc;
  }
  legend {
    margin-left: -6px;
    padding: 0 3px;
  }
  .mode {
    height: 46px;
  }
  .mode label,
  .selective label {
    display: flex;
    align-items: center;
    gap: 2px;
  }
  .mode p {
    margin: 2px 0 0 18px;
  }
  .selective {
    display: flex;
    flex-direction: column;
    gap: 8px;
    margin-top: -22px;
    padding-left: 30px;
    color: #6d6d6d;
  }
  input[type='radio'],
  input[type='checkbox'] {
    display: grid;
    place-items: center;
    width: 13px;
    height: 13px;
    appearance: none;
    border: 1px solid #333;
    background: #fff;
  }
  input[type='radio'] {
    border-radius: 50%;
  }
  input[type='radio']:checked::before {
    content: '';
    width: 7px;
    height: 7px;
    border-radius: 50%;
    background: #222;
  }
  input[type='checkbox']:disabled {
    border-color: #ccc;
  }
  input[type='checkbox']:checked::before {
    content: '';
    width: 8px;
    height: 4px;
    margin-bottom: 3px;
    border: solid #aaa;
    border-width: 0 0 1px 1px;
    transform: rotate(-45deg);
  }
  .dialog footer {
    display: flex;
    justify-content: flex-end;
    gap: 8px;
    padding: 8px 7px;
  }
  .dialog footer button {
    width: 73px;
    height: 21px;
    border: 1px solid #adadad;
    background: #e1e1e1;
  }
  .dialog footer .default {
    border: 2px solid #1a74c0;
  }
  .dialog footer button:disabled {
    border-color: #c4c4c4;
    background: #ccc;
    color: #8a8a8a;
  }

  /* taskbar */
  .taskbar {
    position: relative;
    display: flex;
    height: 40px;
    background: #020406;
    color: #fff;
  }
  .task {
    width: 48px;
    height: 40px;
  }
  .ask {
    display: flex;
    align-items: center;
    width: 344px;
    padding: 0 12px 0 8px;
    background: #333;
  }
  .ask input {
    flex: 1;
    margin-left: 8px;
    outline: 0;
    font-size: 14px;
  }
  .ask input::placeholder {
    color: #aaa;
    opacity: 1;
  }
  .apps {
    display: flex;
    gap: 1px;
    padding-left: 3px;
  }
  .open {
    border-bottom: 2px solid #76b9ed;
    padding-top: 2px;
  }
  .active {
    background: #35383c;
  }
  .watermark {
    position: absolute;
    right: 24px;
    top: 0;
    display: flex;
    gap: 10px;
    height: 40px;
    overflow: hidden;
    color: #77787a;
    font-family: 'Open Sans', 'Noto Sans', sans-serif;
    font-size: 18px;
    line-height: 30px;
  }
  .tray {
    position: relative;
    display: flex;
    align-items: center;
    margin: 0 4px 0 auto;
    padding-right: 18px;
    border-right: 1px solid #555;
  }
  .tray-icons {
    display: flex;
    gap: 4px;
    margin-left: 16px;
  }
  .clock {
    display: flex;
    flex-direction: column;
    align-items: center;
    width: 68px;
    margin-right: 8px;
    line-height: 18px;
  }
</style>
